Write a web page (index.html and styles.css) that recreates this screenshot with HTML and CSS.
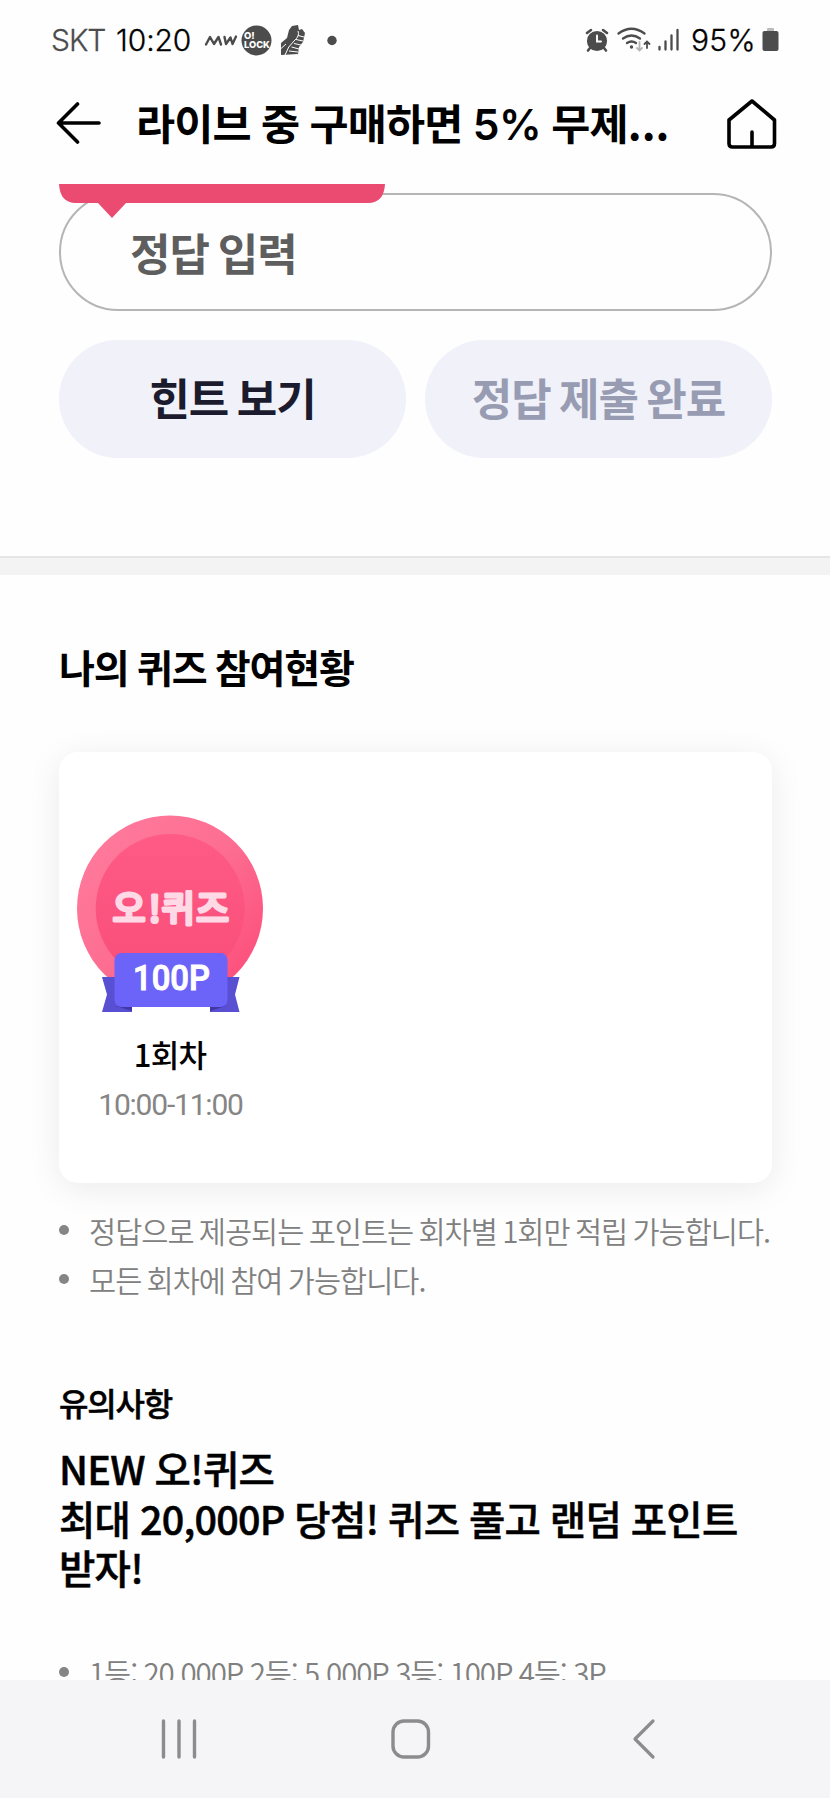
FILE: index.html
```html
<!DOCTYPE html>
<html lang="ko">
<head>
<meta charset="utf-8">
<title>오!퀴즈</title>
<link rel="stylesheet" href="styles.css">
</head>
<body>
<div class="screen">
  <div class="status">
    <span class="carrier">SKT</span>
    <span class="clock">10:20</span>
    <svg class="status-left" width="136" height="40" viewBox="0 0 136 40">
      <path d="M2 24.500 6 17 10 24 14.500 17 17 24.500M20.500 17 22 24 26.500 17.500 28.500 24 32 16.500" fill="none" stroke="#4c4c4c" stroke-width="2.400" stroke-linecap="round" stroke-linejoin="round"/>
      <circle cx="52.500" cy="20.500" r="15" fill="#4c4c4c"/>
      <text class="lock" x="40" y="18.500">O!</text>
      <text class="lock" x="40" y="27.500" textLength="26" lengthAdjust="spacingAndGlyphs">LOCK</text>
      <path d="M88 6 94 5 95 10 98 9 101 13 99 22 95 27 94 34 77 35 77 23 83 18 85 10Z" fill="#4c4c4c"/>
      <path d="M81 35Q84 26 90 21T94 11M77 28.500 82 24M90 23.500 97 25M87.500 27 95 29M85 31 94 32M92 19.500 99 21M94 15.500 100 17" stroke="#fefefe" stroke-width="1" fill="none"/>
      <circle cx="128" cy="20.500" r="4.700" fill="#4c4c4c"/>
    </svg>
    <svg class="status-right" width="98" height="40" viewBox="0 0 98 40">
      <g fill="none" stroke="#4c4c4c" stroke-width="2.600" stroke-linecap="round">
        <circle cx="14" cy="21" r="8.800" fill="#4c4c4c"/>
        <path d="M4 13 8 10M24 13 20 10M7 28 5 30.500M21 28 23 30.500"/>
        <path d="M14 15.500V21.500H18" stroke="#fff" stroke-width="1.900"/>
        <path d="M35.500 13.500Q48.500 4 61.500 13.500M40 18.500Q48.500 12.500 57 18.500M44 23Q48.500 20 53 23" stroke-width="2.300"/>
        <path d="M64 28V22M61.500 24 64 21.500 66.500 24" stroke-width="1.800"/>
        <path d="M56.500 22V30M54 28 56.500 30.500 59 28" stroke="#b5b5b5" stroke-width="1.800"/>
        <path d="M76.500 27V29.500M82.500 21.500V29.500M88.500 15.500V29.500M94.500 10V29.500" stroke-width="2.300"/>
      </g>
      <circle cx="48.500" cy="27" r="1.700" fill="#4c4c4c"/>
    </svg>
    <span class="percent">95%</span>
    <svg class="battery" width="17" height="24" viewBox="0 0 17 24">
      <rect x="5" y="0" width="7" height="5" rx="1" fill="#bbb"/>
      <rect x=".5" y="3" width="16" height="20" rx="2" fill="#4c4c4c"/>
    </svg>
  </div>
  <header class="appbar">
    <svg class="back" width="46" height="44" viewBox="0 0 46 44">
      <path d="M21.500 2 2.500 21 21.500 40M2.500 21H43" fill="none" stroke="#000" stroke-width="3.600" stroke-linecap="round" stroke-linejoin="round"/>
    </svg>
    <h1 class="title">라이브 중 구매하면 <span class="latin">5%</span> 무제<span class="dots">...</span></h1>
    <svg class="home" width="50" height="50" viewBox="0 0 50 50">
      <path d="M25 2 47.500 21V44.500Q47.500 48 44 48H5.500Q2 48 2 44.500V21ZM25 33V47" fill="none" stroke="#000" stroke-width="3.600" stroke-linecap="round" stroke-linejoin="round"/>
    </svg>
  </header>
  <main class="content">
    <section class="answer">
      <div class="field">정답 입력</div>
      <svg class="bubble" width="326" height="35" viewBox="0 0 326 35">
        <path d="M0 0H326Q325 19 309 19H67L53 34 39 19H17Q1 19 0 0Z" fill="#eb4a71"/>
      </svg>
      <div class="buttons">
        <div class="button">힌트 보기</div>
        <div class="button done">정답 제출 완료</div>
      </div>
    </section>
    <div class="divider"></div>
    <section class="history">
      <h2 class="heading">나의 퀴즈 참여현황</h2>
      <div class="card">
        <div class="round">
          <svg class="medal" width="190" height="200" viewBox="75 813 190 200">
            <defs>
              <linearGradient id="rim" x1="0" y1="0" x2="1" y2="1"><stop offset="0" stop-color="#ff7d9f"/><stop offset=".5" stop-color="#fd6d91"/><stop offset="1" stop-color="#fc4776"/></linearGradient>
              <linearGradient id="face" x1="0" y1="0" x2="0" y2="1"><stop offset="0" stop-color="#fe5b86"/><stop offset="1" stop-color="#f94d79"/></linearGradient>
            </defs>
            <circle cx="170" cy="908.500" r="93" fill="url(#rim)"/>
            <circle cx="170.200" cy="908.500" r="74.500" fill="url(#face)"/>
            <text class="logo" y="922" x="112.500 148.500 161.500 196">오!퀴즈</text>
            <path d="M102 977H132V1012H102L107 994.500ZM239.500 977H210V1012H239.500L235 994.500Z" fill="#584fd2"/>
            <path d="M116 1006H132V1011ZM226 1006H210V1011Z" fill="#4038a8"/>
            <rect x="114.500" y="953" width="113" height="54" rx="7" fill="#6c63f8"/>
            <text class="points" x="133" y="990" textLength="77" lengthAdjust="spacingAndGlyphs">100P</text>
          </svg>
          <p class="round-name">1회차</p>
          <p class="round-time">10:00-11:00</p>
        </div>
      </div>
      <ul class="notes">
        <li class="note">정답으로 제공되는 포인트는 회차별 1회만 적립 가능합니다.</li>
        <li class="note">모든 회차에 참여 가능합니다.</li>
      </ul>
    </section>
    <section class="terms">
      <h3 class="caption">유의사항</h3>
      <p class="lead">NEW 오!퀴즈<br>최대 20,000P 당첨! 퀴즈 풀고 랜덤 포인트<br>받자!</p>
      <ul class="notes prizes">
        <li class="note">1등: 20,000P 2등: 5,000P 3등: 100P 4등: 3P</li>
      </ul>
    </section>
  </main>
  <nav class="navbar">
    <svg width="36" height="42" viewBox="0 0 36 42"><path d="M2.500 3V39M18 3V39M33.500 3V39" stroke="#8c8c8e" stroke-width="3.400" stroke-linecap="round"/></svg>
    <svg width="40" height="42" viewBox="0 0 40 42"><rect x="2" y="3" width="35.500" height="36" rx="11" fill="none" stroke="#8c8c8e" stroke-width="3.400"/></svg>
    <svg width="24" height="42" viewBox="0 0 24 42"><path d="M21 3 3 21 21 39" fill="none" stroke="#8c8c8e" stroke-width="3.200" stroke-linecap="round" stroke-linejoin="round"/></svg>
  </nav>
</div>
</body>
</html>
```
FILE: styles.css
```css
* { box-sizing: border-box; }
body, h1, h2, h3, p, ul { margin: 0; padding: 0; }
body { background: #fff; font-family: "Noto Sans CJK KR", sans-serif; color: #000; }
.screen { width: 830px; height: 1798px; display: flex; flex-direction: column; overflow: hidden; background: #fefefe; }

.status { height: 80px; flex: none; display: flex; align-items: center; padding-left: 51px; font: 300 30px/40px Inter, sans-serif; white-space: nowrap; -webkit-text-stroke: .3px; }
.carrier { width: 65px; color: #4c4c4c; letter-spacing: -1px; }
.clock { width: 88px; letter-spacing: -.1px; }
.status-right { margin-left: 243px; }
.percent { margin-left: 10px; width: 71px; letter-spacing: .3px; }
.lock { font: 800 9.500px Inter, sans-serif; fill: #fff; -webkit-text-stroke: 0; }

.appbar { height: 104px; flex: none; display: flex; align-items: center; padding: 0 52px 18px 56px; }
.back { margin-top: 2px; }
.title { width: 566px; margin-left: 34px; font-size: 42.500px; line-height: 60px; font-weight: 700; letter-spacing: -.8px; word-spacing: -1px; white-space: nowrap; }
.latin { font-family: Inter, sans-serif; font-weight: 600; letter-spacing: -.5px; }
.dots { letter-spacing: 0; }
.home { margin: 1px 0 0 25px; }

.content { height: 1496px; flex: none; overflow: hidden; }
.answer { position: relative; height: 372px; padding: 9px 58px 0 59px; }
.bubble { position: absolute; left: 59px; top: 0; }
.field { height: 118px; border: 2px solid #b5b5b5; border-radius: 59px; padding-left: 69px; font-size: 44px; line-height: 114px; font-weight: 700; color: #5e5e5e; letter-spacing: -1px; word-spacing: -2.500px; }
.buttons { display: grid; grid-template-columns: 1fr 1fr; gap: 19px; margin-top: 29px; }
.button { height: 118px; border-radius: 59px; background: #f0f1f9; color: #1c1b2e; text-align: center; font-size: 44px; line-height: 114px; font-weight: 700; letter-spacing: -1px; word-spacing: -3px; }
.button.done { color: #989cb2; }
.divider { height: 19px; background: #f3f3f3; border-top: 2px solid #e6e6e6; }

.history { padding: 62px 58px 0 59px; }
.heading { font-size: 39px; line-height: 58px; font-weight: 700; letter-spacing: -1.100px; word-spacing: -1.500px; }
.card { height: 431px; margin-top: 57px; border-radius: 19px; background: #fff; box-shadow: 0 6px 34px rgba(0,0,0,.08); padding: 61px 16px; }
.round { width: 190px; text-align: center; }
.medal { display: block; }
.logo { font: 500 36px "Noto Sans CJK KR", sans-serif; fill: #ffd9e6; stroke: #ffd9e6; stroke-width: 3px; stroke-linejoin: round; stroke-linecap: round; }
.points { font: 500 35px Roboto, sans-serif; fill: #fff; stroke: #fff; stroke-width: 1px; }
.round-name { margin-top: 19px; font-size: 31px; line-height: 44px; font-weight: 500; letter-spacing: -.8px; }
.round-time { margin-top: 8px; padding-left: 1px; font: 400 30px/42px Roboto, sans-serif; color: #858585; letter-spacing: -1.200px; }
.notes { list-style: none; margin-top: 23px; }
.note { position: relative; padding-left: 30px; font-size: 29.500px; line-height: 49px; font-weight: 350; color: #808080; letter-spacing: -1px; word-spacing: -2px; white-space: nowrap; }
.note::before { content: ""; position: absolute; left: 0; top: 19px; width: 10px; height: 10px; border-radius: 50%; background: #858585; }
.terms { padding: 75px 0 0 59px; }
.caption { font-size: 32px; line-height: 46px; font-weight: 500; letter-spacing: -1.200px; -webkit-text-stroke: .5px; }
.lead { margin-top: 18px; font-size: 39.500px; line-height: 49.500px; font-weight: 500; letter-spacing: -.75px; word-spacing: -.6px; white-space: nowrap; -webkit-text-stroke: .5px; }
.prizes { margin-top: 56px; }
.prizes .note { letter-spacing: -1.100px; word-spacing: -.7px; }

.navbar { flex: 1; background: #f5f5f8; display: flex; align-items: center; padding-left: 161px; }
.navbar svg:nth-child(2) { margin-left: 194px; }
.navbar svg:nth-child(3) { margin-left: 201px; }
```
